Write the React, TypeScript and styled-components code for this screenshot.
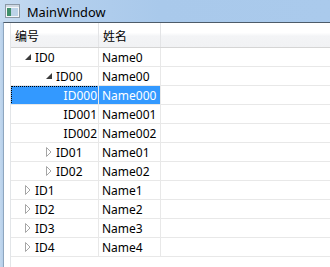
import React from "react";
import styled, { createGlobalStyle } from "styled-components";

const Global = createGlobalStyle`
  html, body { margin: 0; padding: 0; }
  body {
    width: 330px; height: 267px; overflow: hidden;
    background: #b9d2ec;
    font-family: "Noto Sans", "Noto Sans CJK SC", sans-serif;
    font-size: 12px;
    color: #000;
  }
`;

const Window = styled.div`
  width: 330px;
  height: 267px;
  display: flex;
  flex-direction: column;
  background: linear-gradient(90deg, #c3d8ee 0px, #b5cfea 3px);
`;

const TitleBar = styled.div`
  height: 22px;
  display: flex;
  align-items: center;
  gap: 7px;
  padding-left: 5px;
  background: linear-gradient(90deg, #c8dcf1 0px, #b3cfed 60px, #a9c9eb 160px, #aacaec 100%);
  flex-shrink: 0;
`;

const TitleText = styled.span`
  font-family: "Noto Sans", sans-serif;
  font-size: 12.8px;
  color: #000;
  line-height: 22px;
  padding-top: 1px;
`;

const Client = styled.div`
  flex: 1;
  margin-left: 3px;
  border-top: 1px solid #4d5b69;
  border-left: 1px solid #8ea6bf;
  background: #fff;
  display: flex;
  padding-left: 6px;
`;

const Tree = styled.div`
  flex: 1;
  border-left: 1px solid #e2e5e8;
  display: flex;
  flex-direction: column;
`;

const HeaderRow = styled.div`
  display: flex;
  height: 24px;
  border-bottom: 1px solid #d5d5d5;
  background: linear-gradient(180deg, #ffffff 0%, #ffffff 40%, #f3f4f6 55%, #f1f2f4 100%);
`;

const HeaderCell = styled.div<{ $w?: number }>`
  ${(p) => (p.$w ? `width: ${p.$w}px;` : "flex: 1;")}
  flex-shrink: 0;
  box-sizing: border-box;
  border-right: ${(p) => (p.$w ? "1px solid #e3e4e6" : "none")};
  padding-left: 4px;
  display: flex;
  align-items: center;
  font-size: 12px;
  padding-top: 1px;
`;

const Row = styled.div`
  display: flex;
  height: 19px;
  box-sizing: border-box;
  border-bottom: 1px solid #e8e8e8;
`;

const Cell = styled.div<{ $w?: number; $sel?: boolean }>`
  ${(p) => (p.$w ? `width: ${p.$w}px;` : "flex: 1;")}
  flex-shrink: 0;
  box-sizing: border-box;
  border-right: ${(p) => (p.$w ? "1px solid #e8e8e8" : "none")};
  display: flex;
  align-items: center;
  overflow: hidden;
  white-space: nowrap;
  position: relative;
  background: ${(p) => (p.$sel ? "#3399ff" : "transparent")};
  color: ${(p) => (p.$sel ? "#fff" : "#000")};
`;

const Focus = styled.div`
  position: absolute;
  inset: 0 -1px -1px 0;
  border: 1px dotted #000;
  pointer-events: none;
`;

const TreeContent = styled.div<{ $indent: number; $end?: boolean }>`
  flex: 1;
  display: flex;
  align-items: center;
  justify-content: ${(p) => (p.$end ? "flex-end" : "flex-start")};
  padding-left: ${(p) => p.$indent}px;
  padding-right: ${(p) => (p.$end ? 1 : 0)}px;
`;

const Expander = styled.span`
  width: 10px;
  height: 18px;
  display: inline-flex;
  align-items: center;
  justify-content: flex-start;
  flex-shrink: 0;
`;

const NameText = styled.span`
  padding-left: 3px;
`;

const AppIcon = () => (
  <svg width="15" height="14" viewBox="0 0 15 14">
    <rect x="0.5" y="0.5" width="14" height="13" fill="#f4f6f8" stroke="#8c99a6" />
    <rect x="1" y="1" width="13" height="2" fill="#cfd8e2" />
    <rect x="2" y="4" width="4" height="8" fill="#3f8f6a" />
    <rect x="6" y="4" width="7" height="8" fill="#bcd3e8" />
  </svg>
);

const Expanded = () => (
  <svg width="6" height="6" viewBox="0 0 6 6">
    <polygon points="6,0 6,6 0,6" fill="#3c3c3c" />
  </svg>
);

const Collapsed = () => (
  <svg width="6" height="10" viewBox="0 0 6 10">
    <polygon points="0.5,0.5 5,5 0.5,9.5" fill="none" stroke="#a6a6a6" />
  </svg>
);

type Item = {
  id: string;
  name: string;
  level: number;
  state: "open" | "closed" | "leaf";
  sel?: boolean;
};

const items: Item[] = [
  { id: "ID0", name: "Name0", level: 0, state: "open" },
  { id: "ID00", name: "Name00", level: 1, state: "open" },
  { id: "ID000", name: "Name000", level: 2, state: "leaf", sel: true },
  { id: "ID001", name: "Name001", level: 2, state: "leaf" },
  { id: "ID002", name: "Name002", level: 2, state: "leaf" },
  { id: "ID01", name: "Name01", level: 1, state: "closed" },
  { id: "ID02", name: "Name02", level: 1, state: "closed" },
  { id: "ID1", name: "Name1", level: 0, state: "closed" },
  { id: "ID2", name: "Name2", level: 0, state: "closed" },
  { id: "ID3", name: "Name3", level: 0, state: "closed" },
  { id: "ID4", name: "Name4", level: 0, state: "closed" },
];

const C1 = 88;
const C2 = 62;

export default function App() {
  return (
    <>
      <Global />
      <Window>
        <TitleBar>
          <AppIcon />
          <TitleText>MainWindow</TitleText>
        </TitleBar>
        <Client>
          <Tree>
            <HeaderRow>
              <HeaderCell $w={C1}>编号</HeaderCell>
              <HeaderCell $w={C2}>姓名</HeaderCell>
              <HeaderCell />
            </HeaderRow>
            {items.map((it) => (
              <Row key={it.id}>
                <Cell $w={C1} $sel={it.sel}>
                  {it.state === "leaf" ? (
                    <TreeContent $indent={0} $end>
                      {it.id}
                    </TreeContent>
                  ) : (
                    <TreeContent $indent={14 + it.level * 21}>
                      <Expander>
                        {it.state === "open" ? <Expanded /> : <Collapsed />}
                      </Expander>
                      {it.id}
                    </TreeContent>
                  )}
                  {it.sel && <Focus />}
                </Cell>
                <Cell $w={C2} $sel={it.sel}>
                  <NameText>{it.name}</NameText>
                </Cell>
                <Cell />
              </Row>
            ))}
          </Tree>
        </Client>
      </Window>
    </>
  );
}
